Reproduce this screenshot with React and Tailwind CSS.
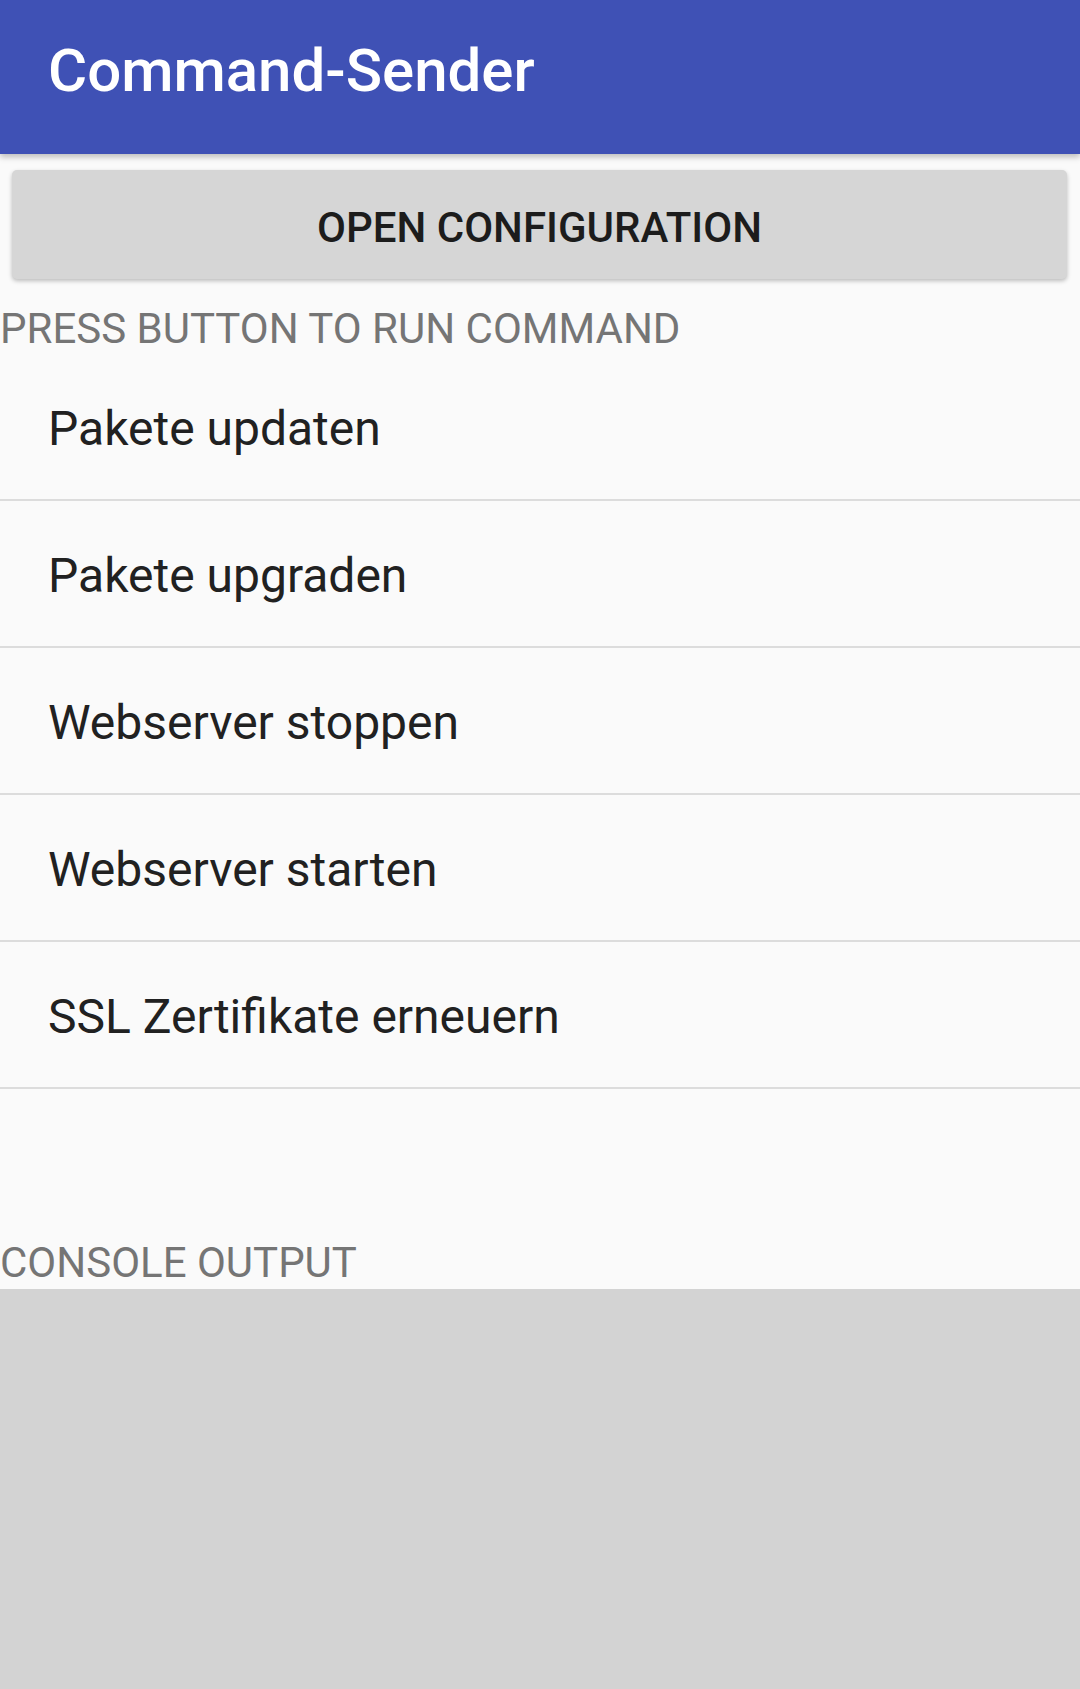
import React from 'react';

// commands shown in the list
const commands = [
    'Pakete updaten',
    'Pakete upgraden',
    'Webserver stoppen',
    'Webserver starten',
    'SSL Zertifikate erneuern',
];

function CommandRow({ label }) {
    return (
        <div className="h-[147px] border-b-2 border-[#DCDCDC] flex items-center pl-[48px] pt-[5px]">
            <span className="text-[48px] leading-[48px] text-[#212121]">{label}</span>
        </div>
    );
}

export default function App() {
    return (
        <div className="min-h-screen flex flex-col bg-[#FAFAFA] font-['Roboto',sans-serif]">
            {/* Toolbar */}
            <header className="relative z-10 h-[154px] bg-[#3F51B5] pl-[48px] pt-[41px] shadow-[0_3px_6px_rgba(0,0,0,0.25)]">
                <h1 className="text-[60px] leading-[60px] font-medium text-white">Command-Sender</h1>
            </header>

            {/* Config button */}
            <div className="pt-[16px] pl-[12px] pr-[13px]">
                <button className="w-full h-[109px] rounded-[5px] bg-[#D6D6D6] shadow-[0_2px_4px_rgba(0,0,0,0.25)] flex items-center justify-center pt-[6px]">
                    <span className="text-[42px] leading-[42px] font-medium text-[#1C1C1C]">OPEN CONFIGURATION</span>
                </button>
            </div>

            <p className="mt-[29px] text-[42px] leading-[42px] text-[#757575]">PRESS BUTTON TO RUN COMMAND</p>

            {/* Command list */}
            <div className="mt-[4px]">
                {commands.map(c => (
                    <CommandRow key={c} label={c} />
                ))}
            </div>

            <p className="mt-[153px] text-[42px] leading-[42px] text-[#757575]">CONSOLE OUTPUT</p>

            {/* Console area */}
            <div className="mt-[5px] flex-1 bg-[#D3D3D3]" />
        </div>
    );
}
